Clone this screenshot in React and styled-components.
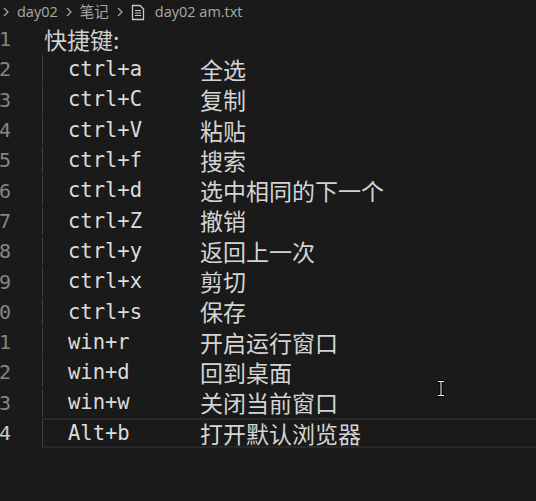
import styled, { createGlobalStyle } from "styled-components";

const GlobalStyle = createGlobalStyle`
  html, body {
    margin: 0;
    padding: 0;
    background: #1a1a1a;
  }
`;

const Page = styled.div`
  position: relative;
  width: 536px;
  height: 501px;
  overflow: hidden;
  background: #1a1a1a;
`;

const Breadcrumbs = styled.div`
  display: flex;
  align-items: center;
  height: 24px;
  padding-left: 2px;
  gap: 7px;
  font-family: "Open Sans", "Noto Sans CJK SC", sans-serif;
  font-size: 14.5px;
  color: #a9a9a9;
  white-space: nowrap;
`;

const Crumb = styled.span`
  display: flex;
  align-items: center;
  line-height: 1;
  gap: ${(p) => (p.$gap ? p.$gap : 0)}px;
`;

const Chevron = styled.svg`
  width: 8px;
  height: 10px;
  flex: none;
`;

const Editor = styled.div`
  display: flex;
  flex-direction: column;
`;

const Line = styled.div`
  display: grid;
  grid-template-columns: 11px 1fr;
  column-gap: 31px;
  height: 30.3px;
`;

const Gutter = styled.div`
  display: flex;
  justify-content: flex-end;
  align-items: center;
  overflow: hidden;
  font-family: "DejaVu Sans Mono", monospace;
  font-size: 20px;
  line-height: 1;
  color: ${(p) => (p.$active ? "#c6c6c6" : "#858585")};
`;

const Content = styled.div`
  display: flex;
  align-items: center;
  padding-left: ${(p) => (p.$indent ? 25 : 1)}px;
  border-left: 1px solid ${(p) => (p.$guide ? "#404040" : "transparent")};
  border-top: 2px solid ${(p) => (p.$active ? "#282828" : "transparent")};
  border-bottom: 2px solid ${(p) => (p.$active ? "#282828" : "transparent")};
  box-sizing: border-box;
  white-space: nowrap;
`;

const Key = styled.span`
  width: 132px;
  font-family: "DejaVu Sans Mono", monospace;
  font-size: 20.5px;
  line-height: 1;
  color: #dcdcdc;
`;

const Desc = styled.span`
  font-family: "Noto Sans CJK SC", sans-serif;
  font-size: 23px;
  line-height: 1;
  color: #d4d4d4;
`;

const Heading = styled(Desc)`
  color: #cfcfcf;
`;

const MouseCursor = styled.svg`
  position: absolute;
  left: 436px;
  top: 380px;
  width: 10px;
  height: 17px;
`;

const shortcuts = [
  ["ctrl+a", "全选"],
  ["ctrl+C", "复制"],
  ["ctrl+V", "粘贴"],
  ["ctrl+f", "搜索"],
  ["ctrl+d", "选中相同的下一个"],
  ["ctrl+Z", "撤销"],
  ["ctrl+y", "返回上一次"],
  ["ctrl+x", "剪切"],
  ["ctrl+s", "保存"],
  ["win+r", "开启运行窗口"],
  ["win+d", "回到桌面"],
  ["win+w", "关闭当前窗口"],
  ["Alt+b", "打开默认浏览器"],
];

function Sep() {
  return (
    <Chevron viewBox="0 0 8 10">
      <path d="M2 1 L6 5 L2 9" fill="none" stroke="#a9a9a9" strokeWidth="1.2" />
    </Chevron>
  );
}

function FileIcon() {
  return (
    <svg width="14" height="17" viewBox="0 0 14 17">
      <path
        d="M1.5 1.5 H9 L12.5 5 V15.5 H1.5 Z"
        fill="none"
        stroke="#c8c8c8"
        strokeWidth="1.3"
      />
      <path d="M4 6.5 H10 M4 9 H10 M4 11.5 H10" stroke="#c8c8c8" strokeWidth="1.2" />
    </svg>
  );
}

export default function App() {
  const last = shortcuts.length + 1;
  return (
    <Page>
      <GlobalStyle />
      <Breadcrumbs>
        <Sep />
        <Crumb>day02</Crumb>
        <Sep />
        <Crumb>笔记</Crumb>
        <Sep />
        <Crumb $gap={10}>
          <FileIcon />
          day02 am.txt
        </Crumb>
      </Breadcrumbs>
      <Editor>
        <Line>
          <Gutter>1</Gutter>
          <Content>
            <Heading>快捷键:</Heading>
          </Content>
        </Line>
        {shortcuts.map(([key, desc], i) => {
          const n = i + 2;
          const active = n === last;
          return (
            <Line key={key}>
              <Gutter $active={active}>{n}</Gutter>
              <Content $indent $guide $active={active}>
                <Key>{key}</Key>
                <Desc>{desc}</Desc>
              </Content>
            </Line>
          );
        })}
      </Editor>
      <MouseCursor viewBox="0 0 10 17">
        <path
          d="M2 1.5 H8 M5 1.5 V15.5 M2 15.5 H8"
          fill="none"
          stroke="#000"
          strokeWidth="3"
        />
        <path
          d="M2 1.5 H8 M5 1.5 V15.5 M2 15.5 H8"
          fill="none"
          stroke="#fff"
          strokeWidth="1"
        />
      </MouseCursor>
    </Page>
  );
}
